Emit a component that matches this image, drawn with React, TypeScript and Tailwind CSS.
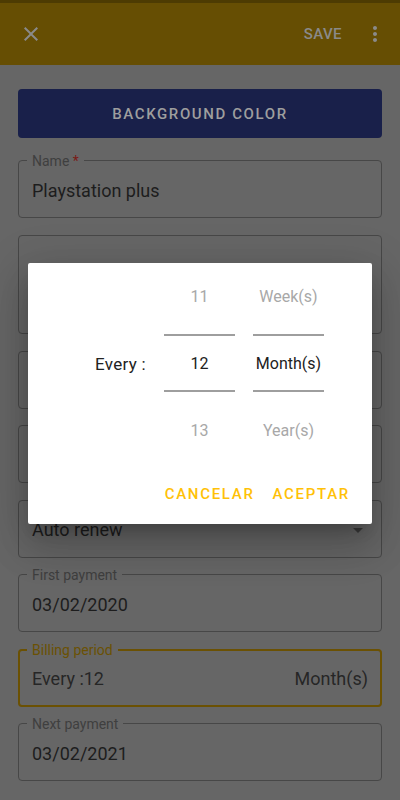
import React from 'react';

const Field: React.FC<{
  label: string;
  required?: boolean;
  focused?: boolean;
  height?: string;
  children?: React.ReactNode;
}> = ({ label, required, focused, height = 'h-[58px]', children }) => (
  <div
    className={`relative ${height} rounded-[4px] flex items-center pt-[2px] ${
      focused ? 'border-2 border-[#6b5103] px-[12px]' : 'border border-[#474747] px-[13px]'
    }`}
  >
    {label && (
      <span
        className={`absolute bg-[#666666] px-[5px] text-[14px] leading-[18px] ${
          focused ? 'text-[#6b5103] -top-[10px] left-[7px]' : 'text-[#3f3f3f] -top-[9px] left-[8px]'
        }`}
      >
        {label}
        {required && <span className="text-[#7a1b17]"> *</span>}
      </span>
    )}
    {children}
  </div>
);

const PickerColumn: React.FC<{ items: [string, string, string] }> = ({ items }) => (
  <div className="w-[71px] flex flex-col">
    <div className="h-[66px] flex items-center justify-center text-[#a8a8a8]">{items[0]}</div>
    <div className="h-[4px]" />
    <div className="h-[58px] border-y-2 border-[#9e9e9e] flex items-center justify-center pt-[1px] text-[#212121]">
      {items[1]}
    </div>
    <div className="h-[6px]" />
    <div className="h-[66px] flex items-center justify-center text-[#a8a8a8]">{items[2]}</div>
  </div>
);

const App: React.FC = () => {
  return (
    <div className="relative w-[400px] h-[800px] overflow-hidden bg-[#666666] font-['Roboto',sans-serif]">
      <div className="h-[3px] bg-[#4d3b02]" />
      <header className="h-[62px] bg-[#664e03] flex items-center pl-[19px] pr-[13px]">
        <svg width="24" height="24" viewBox="0 0 24 24" fill="#8a8a8a">
          <path d="M19 6.41 17.59 5 12 10.59 6.41 5 5 6.41 10.59 12 5 17.59 6.41 19 12 13.41 17.59 19 19 17.59 13.41 12z" />
        </svg>
        <div className="flex-1" />
        <span className="text-[15px] font-medium tracking-[0.4px] text-[#8a8a8a] mr-[21px]">SAVE</span>
        <svg width="24" height="24" viewBox="0 0 24 24" fill="#8a8a8a">
          <path d="M12 8c1.1 0 2-.9 2-2s-.9-2-2-2-2 .9-2 2 .9 2 2 2zm0 2c-1.1 0-2 .9-2 2s.9 2 2 2 2-.9 2-2-.9-2-2-2zm0 6c-1.1 0-2 .9-2 2s.9 2 2 2 2-.9 2-2-.9-2-2-2z" />
        </svg>
      </header>

      <div className="px-[18px] pt-[24px] flex flex-col">
        <button className="h-[49px] rounded-[4px] bg-[#19204a] text-[#9e9e9e] text-[15px] font-medium tracking-[1.6px] pt-[1px] mb-[22px]">
          BACKGROUND COLOR
        </button>

        <div className="flex flex-col gap-[16.5px] text-[18px] text-[#1d1d1d]">
          <Field label="Name" required>
            Playstation plus
          </Field>
          <Field label="" height="h-[99.5px]" />
          <Field label="" />
          <Field label="" />
          <Field label="">
            <span className="flex-1">Auto renew</span>
            <svg width="24" height="24" viewBox="0 0 24 24" fill="#3a3a3a" className="-mr-[2px]">
              <path d="M7 10l5 5 5-5z" />
            </svg>
          </Field>
          <Field label="First payment">03/02/2020</Field>
          <Field label="Billing period" focused>
            <span className="flex-1 text-[#262626]">Every :12</span>
            <span className="text-[#262626]">Month(s)</span>
          </Field>
          <Field label="Next payment">03/02/2021</Field>
        </div>
      </div>

      <div className="absolute left-[28px] top-[263px] w-[344px] h-[261px] bg-white rounded-[2px] shadow-[0_11px_15px_-7px_rgba(0,0,0,0.2),0_24px_38px_3px_rgba(0,0,0,0.14),0_9px_46px_8px_rgba(0,0,0,0.12)] flex flex-col">
        <div className="flex text-[16px] pt-[1px]">
          <div className="w-[118px] flex items-center justify-end text-[17px] text-[#222222] tracking-[0.3px] pt-[2px]">
            Every :
          </div>
          <div className="w-[18px]" />
          <PickerColumn items={['11', '12', '13']} />
          <div className="w-[18px]" />
          <PickerColumn items={['Week(s)', 'Month(s)', 'Year(s)']} />
        </div>
        <div className="flex justify-end items-center gap-[2px] mt-[12px] pr-[14px]">
          <button className="h-[36px] px-[8px] text-[15px] font-medium tracking-[1.7px] text-[#ffc107]">CANCELAR</button>
          <button className="h-[36px] px-[8px] text-[15px] font-medium tracking-[1.7px] text-[#ffc107]">ACEPTAR</button>
        </div>
      </div>
    </div>
  );
};

export default App;
